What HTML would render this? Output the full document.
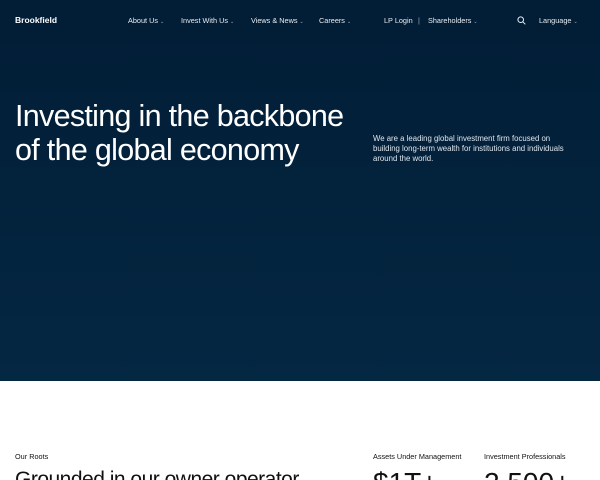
<!DOCTYPE html>
<html><head><style>
*{margin:0;padding:0;box-sizing:border-box}
html,body{width:600px;height:480px;overflow:hidden}
body{background:#fff;font-family:"Liberation Sans",sans-serif;position:relative}
.hero{position:absolute;left:0;top:0;width:600px;height:381px;background:linear-gradient(180deg,#021d36 0%,#042742 100%)}
.t{position:absolute;white-space:nowrap;color:#fff}
.nav{font-size:7.3px;top:16px;color:#e8edf2}
.car{font-size:5px;color:#9fb0c0;margin-left:2px}
h1{position:absolute;left:15px;top:99px;font-weight:normal;font-size:30.5px;line-height:34px;color:#fff;letter-spacing:-0.7px}
.p{position:absolute;left:373px;top:134px;font-size:7.8px;line-height:10.2px;color:#dfe6ee;width:196px}
.d{position:absolute;color:#111;white-space:nowrap}
</style></head><body>
<div class="hero">
<div class="t" style="left:15px;top:15px;font-size:8.5px;font-weight:bold">Brookfield</div>
<div class="t nav" style="left:128px">About Us<span class="car">⌄</span></div>
<div class="t nav" style="left:181px">Invest With Us<span class="car">⌄</span></div>
<div class="t nav" style="left:251px">Views &amp; News<span class="car">⌄</span></div>
<div class="t nav" style="left:319px">Careers<span class="car">⌄</span></div>
<div class="t nav" style="left:384px">LP Login</div>
<div class="t nav" style="left:418px;color:#aab">|</div>
<div class="t nav" style="left:428px">Shareholders<span class="car">⌄</span></div>
<svg style="position:absolute;left:517px;top:16px" width="9" height="9" viewBox="0 0 9 9"><circle cx="3.7" cy="3.7" r="2.8" stroke="#e8edf2" stroke-width="1" fill="none"/><line x1="5.8" y1="5.8" x2="8.3" y2="8.3" stroke="#e8edf2" stroke-width="1"/></svg>
<div class="t nav" style="left:539px">Language<span class="car">⌄</span></div>
<h1>Investing in the backbone<br>of the global economy</h1>
<div class="p">We are a leading global investment firm focused on building long-term wealth for institutions and individuals around the world.</div>
</div>
<div class="d" style="left:15px;top:452px;font-size:7.3px">Our Roots</div>
<div class="d" style="left:373px;top:452px;font-size:7.3px">Assets Under Management</div>
<div class="d" style="left:484px;top:452px;font-size:7.3px">Investment Professionals</div>
<div class="d" style="left:15px;top:468px;font-size:21px;letter-spacing:-0.5px">Grounded in our owner operator</div>
<div class="d" style="left:373px;top:467px;font-size:28px">$1T+</div>
<div class="d" style="left:484px;top:467px;font-size:28px">2,500+</div>
</body></html>
